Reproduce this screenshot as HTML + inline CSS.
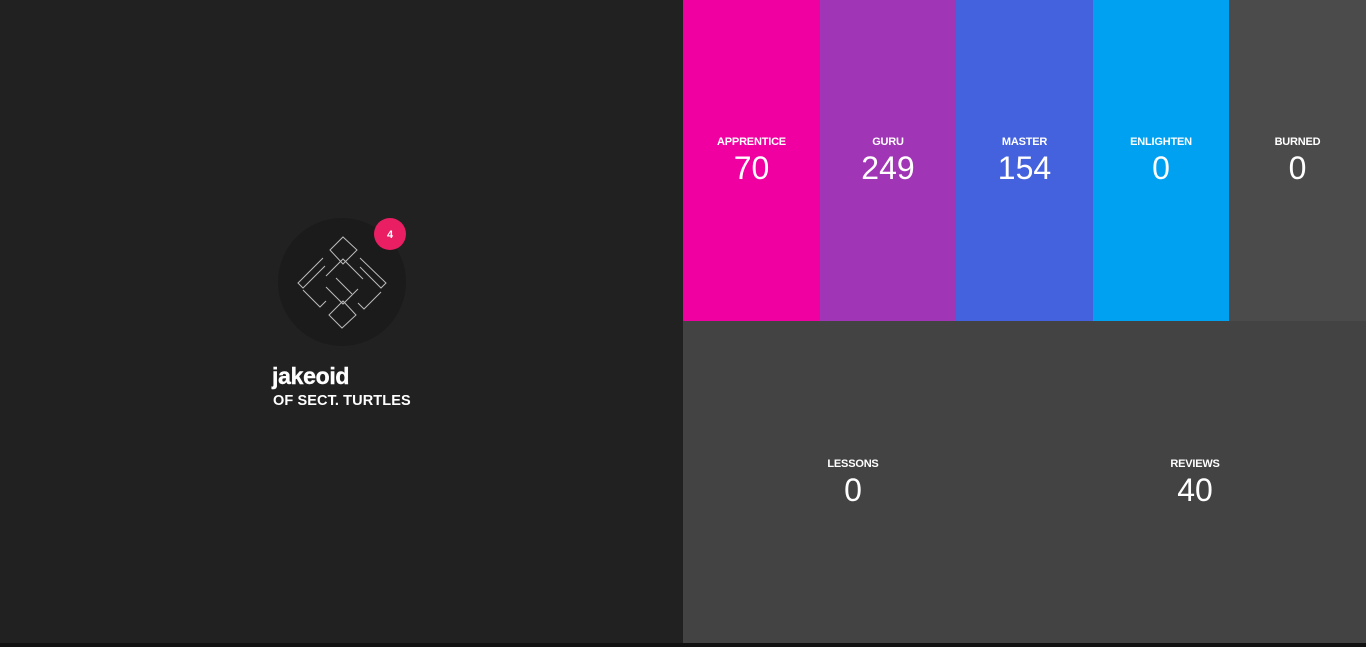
<!DOCTYPE html><html><head><style>
body{margin:0;width:1366px;height:647px;background:#111;overflow:hidden;font-family:"Liberation Sans",sans-serif;color:#fff}
.l{position:absolute;left:0;top:0;width:683px;height:643px;background:#212121}
.c{position:absolute;text-align:center}
.c b{display:block;font-size:11px;letter-spacing:-0.2px}
.c span{display:block;font-size:32px;line-height:34px;margin-top:3px}
</style></head><body>
<div class="l"></div>
<div class="c" style="left:683px;top:0;width:137px;height:321px;background:#f100a1"><b style="margin-top:136px">APPRENTICE</b><span>70</span></div>
<div class="c" style="left:820px;top:0;width:136px;height:321px;background:#a035b5"><b style="margin-top:136px">GURU</b><span>249</span></div>
<div class="c" style="left:956px;top:0;width:137px;height:321px;background:#4562de"><b style="margin-top:136px">MASTER</b><span>154</span></div>
<div class="c" style="left:1093px;top:0;width:136px;height:321px;background:#00a1f1"><b style="margin-top:136px">ENLIGHTEN</b><span>0</span></div>
<div class="c" style="left:1229px;top:0;width:137px;height:321px;background:#4b4b4b"><b style="margin-top:136px">BURNED</b><span>0</span></div>
<div class="c" style="left:683px;top:321px;width:683px;height:322px;background:#434343"></div>
<div class="c" style="left:783px;top:321px;width:140px"><b style="margin-top:137px">LESSONS</b><span>0</span></div>
<div class="c" style="left:1125px;top:321px;width:140px"><b style="margin-top:137px">REVIEWS</b><span>40</span></div>
<svg style="position:absolute;left:0;top:0" width="683" height="647">
<circle cx="342" cy="282" r="64" fill="#1b1b1b"/>
<g fill="none" stroke="#bbb" stroke-width="1">
<path d="M330 250 L343 237 L357 250 L343 264 Z"/>
<path d="M329 315 L343 301 L356 315 L342 328 Z"/>
<path d="M323 258 L298 283 L303 288 L325 266"/>
<path d="M303 290 L320 307 L326 301"/>
<path d="M360 258 L386 283 L381 288 L360 267"/>
<path d="M381 292 L364 309 L358 303"/>
<path d="M326 276 L343 259 L363 279 M326 287 L343 304 L358 289 M336 278 L352 294"/>
</g>
<circle cx="390" cy="234" r="16" fill="#e91e63"/>
<text x="390" y="238" font-size="11" font-weight="bold" fill="#fff" text-anchor="middle" font-family="Liberation Sans">4</text>
<text x="272" y="384" font-size="23" font-weight="bold" fill="#fff" font-family="Liberation Sans" letter-spacing="-0.3" stroke="#fff" stroke-width="0.4">jakeoid</text>
<text x="273" y="405" font-size="14.5" font-weight="bold" fill="#fff" font-family="Liberation Sans" letter-spacing="0.1">OF SECT. TURTLES</text>
</svg>
</body></html>
